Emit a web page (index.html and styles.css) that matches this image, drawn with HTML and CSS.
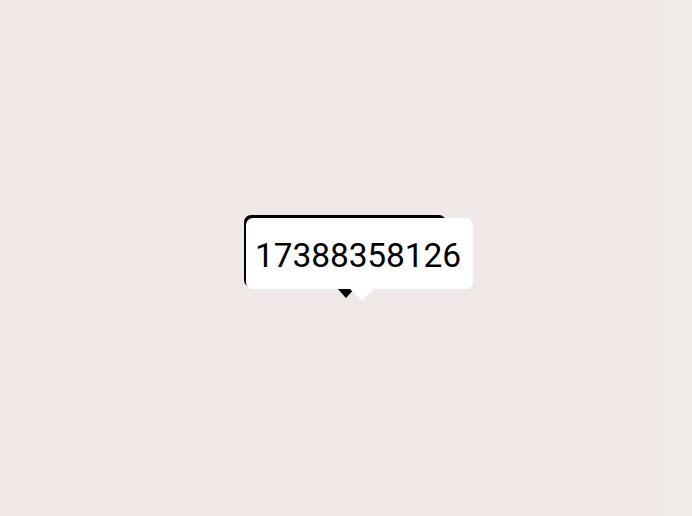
FILE: index.html
```html
<!DOCTYPE html>
<html>
<head>
<meta charset="utf-8">
<link rel="stylesheet" href="styles.css">
</head>
<body>
<div class="page">
  <div class="main"></div>
  <div class="edge"></div>
</div>
<div class="tip-ghost"></div>
<div class="tip">17388358126</div>
</body>
</html>
```
FILE: styles.css
```css
html, body { margin: 0; padding: 0; }
body { width: 692px; height: 516px; overflow: hidden; background: #f0e9e7; font-family: Roboto, "Liberation Sans", sans-serif; }
.page { display: flex; height: 516px; }
.main { flex: 1; background: #efe8e6; }
.edge { width: 29px; background: #f2edeb; }
.tip-ghost {
  position: absolute; left: 244px; top: 215px; width: 202px; height: 72px;
  background: #000; border-radius: 7px;
}
.tip-ghost::after {
  content: ""; position: absolute; left: 92px; top: 72px;
  border-left: 10px solid transparent; border-right: 10px solid transparent;
  border-top: 11px solid #000;
}
.tip {
  position: absolute; left: 246px; top: 218px; width: 227px; height: 71px;
  background: #fff; border-radius: 7px; box-sizing: border-box;
  padding-left: 9px; padding-top: 2px; font-size: 33.5px; line-height: 71px; color: #000;
  font-weight: 400; letter-spacing: -0.1px;
}
.tip::after {
  content: ""; position: absolute; left: 104px; top: 71px;
  border-left: 12px solid transparent; border-right: 12px solid transparent;
  border-top: 12px solid #fff;
}
```
